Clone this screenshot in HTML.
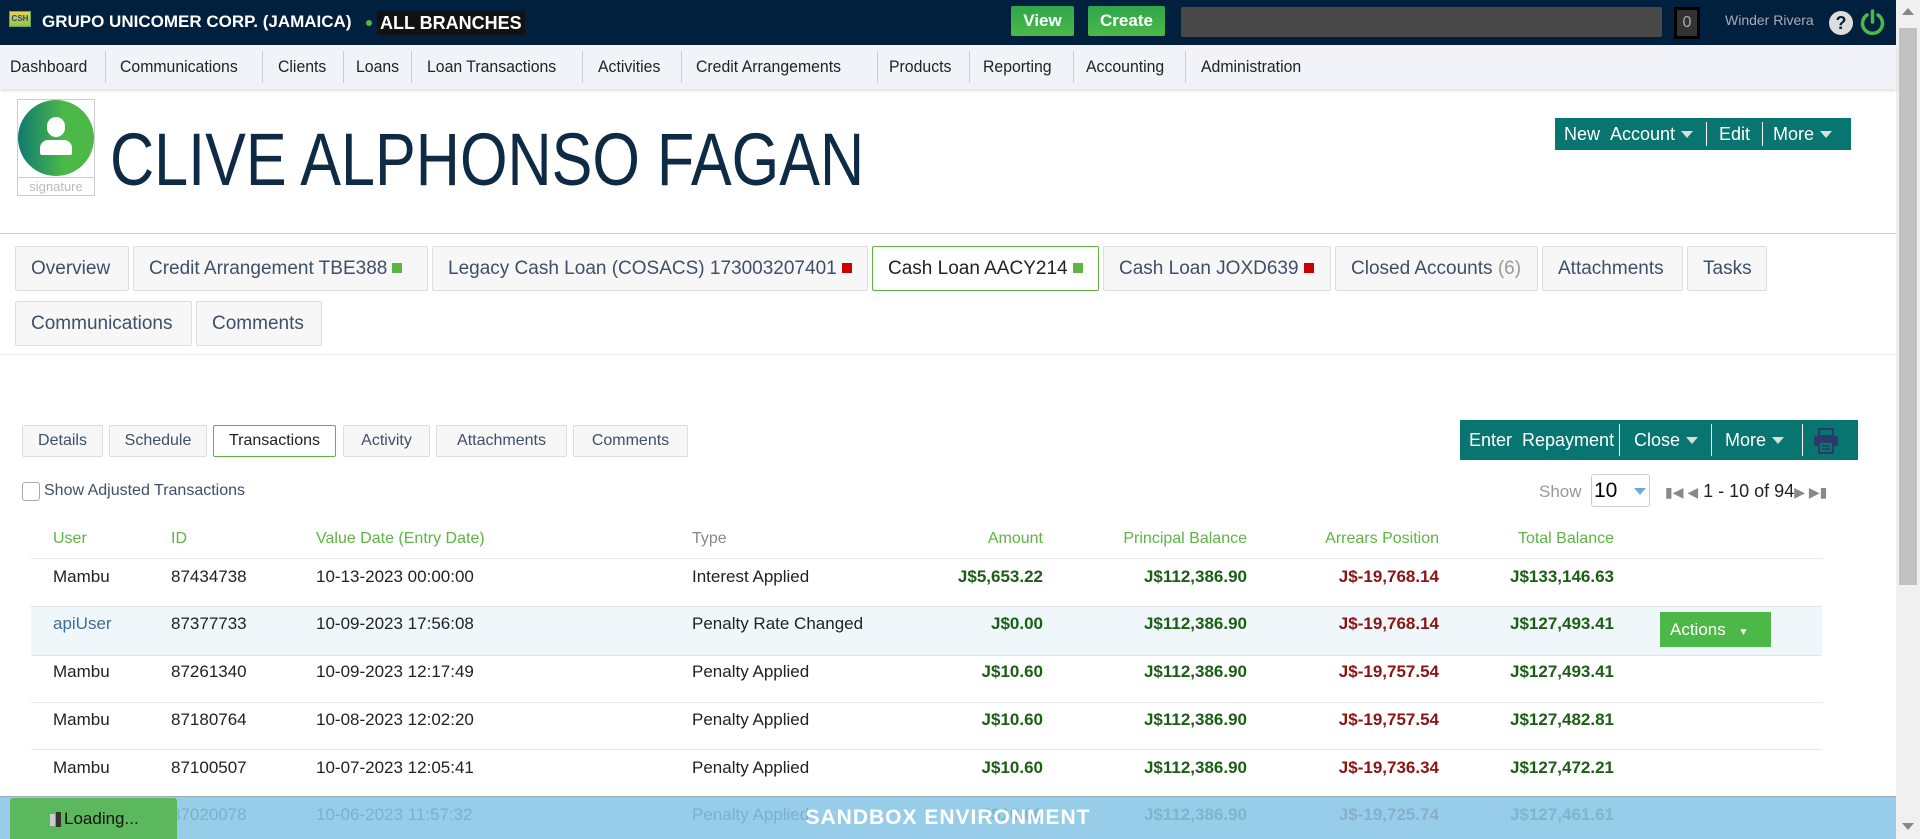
<!DOCTYPE html>
<html><head><meta charset="utf-8"><style>
*{box-sizing:border-box;margin:0;padding:0}
body{width:1920px;height:839px;overflow:hidden;background:#fff;font-family:"Liberation Sans",sans-serif;position:relative;color:#222}
.a{position:absolute;white-space:nowrap}
.top{left:0;top:0;width:1896px;height:45px;background:#01203e}
.nav{left:0;top:45px;width:1896px;height:44px;background:#f2f3f8;box-shadow:0 2px 3px rgba(0,0,0,.12)}
.ni{top:45px;height:44px;line-height:44px;font-size:17px;color:#222;transform:scaleX(.93);transform-origin:left}
.sep{top:51px;width:1px;height:32px;background:#ccc}
.tab{height:45px;line-height:43px;border:1px solid #ddd;border-radius:2px;background:#f7f7f7;font-size:19px;color:#3e5068;padding-left:15px}
.st{top:425px;height:32px;line-height:30px;border:1px solid #ddd;border-radius:2px;background:#f7f7f7;font-size:16px;color:#3e5068;text-align:center}
.sq{display:inline-block;width:10px;height:10px;margin-left:5px;vertical-align:1px}
.th{top:530px;font-size:16px;color:#5db544}
.td{font-size:17px}
.r{text-align:right}
.b{font-weight:bold}
.g{color:#1c5e16}.rd{color:#8b1414}
.hl{height:1px;background:#e6e6e6;left:31px;width:1791px}
.tri{display:inline-block;width:0;height:0;border-left:6px solid transparent;border-right:6px solid transparent;border-top:7px solid #fff;margin-left:6px;vertical-align:2px}
</style></head><body>
<div class="a top"></div>
<div class="a" style="left:9px;top:11px;width:22px;height:16px;background:linear-gradient(#e7d34a,#9bc23a);border:1px solid #5a7;font-size:8px;color:#1c4a9c;font-weight:bold;line-height:14px;text-align:center">CSH</div>
<div class="a b" style="left:42px;top:12px;font-size:17px;color:#fff">GRUPO UNICOMER CORP. (JAMAICA)</div>
<div class="a" style="left:366px;top:20px;width:6px;height:6px;border-radius:3px;background:#4cb848"></div>
<div class="a b" style="left:377px;top:11px;height:24px;padding:0 3px;background:#121212;color:#fff;font-size:18px;line-height:24px">ALL BRANCHES</div>
<div class="a b" style="left:1011px;top:6px;width:63px;height:30px;background:linear-gradient(#2ea64a,#4cb848);border-radius:2px;color:#fff;font-size:17px;text-align:center;line-height:30px">View</div>
<div class="a b" style="left:1088px;top:6px;width:77px;height:30px;background:linear-gradient(#2ea64a,#4cb848);border-radius:2px;color:#fff;font-size:17px;text-align:center;line-height:30px">Create</div>
<div class="a" style="left:1181px;top:7px;width:481px;height:30px;background:#474747;border-radius:2px"></div>
<div class="a" style="left:1674px;top:7px;width:26px;height:32px;background:#333;border:3px solid #000;color:#aaa;font-size:16px;text-align:center;line-height:26px">0</div>
<div class="a" style="left:1725px;top:12px;font-size:14px;color:#aab">Winder Rivera</div>
<div class="a b" style="left:1829px;top:11px;width:24px;height:24px;border-radius:12px;background:#ddd;color:#01203e;font-size:18px;text-align:center;line-height:24px">?</div>
<svg class="a" style="left:1860px;top:9px" width="25" height="27" viewBox="0 0 25 27"><path d="M7 6A10 10 0 1 0 18 6" fill="none" stroke="#4cb848" stroke-width="3.5" stroke-linecap="round"/><path d="M12.5 2V13" stroke="#4cb848" stroke-width="3.5" stroke-linecap="round"/></svg>
<div class="a" style="left:1896px;top:0;width:24px;height:839px;background:#f0f0f0"></div>
<div class="a" style="left:1899px;top:28px;width:18px;height:557px;background:#c1c1c1"></div>
<div class="a" style="left:1902px;top:8px;width:0;height:0;border-left:6px solid transparent;border-right:6px solid transparent;border-bottom:7px solid #888"></div>
<div class="a" style="left:1902px;top:823px;width:0;height:0;border-left:6px solid transparent;border-right:6px solid transparent;border-top:7px solid #888"></div>

<div class="a nav"></div>
<div class="a ni" style="left:10px">Dashboard</div>
<div class="a ni" style="left:120px">Communications</div>
<div class="a ni" style="left:278px">Clients</div>
<div class="a ni" style="left:356px">Loans</div>
<div class="a ni" style="left:427px">Loan Transactions</div>
<div class="a ni" style="left:598px">Activities</div>
<div class="a ni" style="left:696px">Credit Arrangements</div>
<div class="a ni" style="left:889px">Products</div>
<div class="a ni" style="left:983px">Reporting</div>
<div class="a ni" style="left:1086px">Accounting</div>
<div class="a ni" style="left:1201px">Administration</div>
<div class="a sep" style="left:105px"></div><div class="a sep" style="left:262px"></div><div class="a sep" style="left:343px"></div><div class="a sep" style="left:411px"></div><div class="a sep" style="left:582px"></div><div class="a sep" style="left:681px"></div><div class="a sep" style="left:877px"></div><div class="a sep" style="left:969px"></div><div class="a sep" style="left:1073px"></div><div class="a sep" style="left:1185px"></div>

<div class="a" style="left:17px;top:99px;width:78px;height:97px;border:1px solid #ccc"></div>
<div class="a" style="left:18px;top:100px;width:76px;height:76px;border-radius:38px;background:linear-gradient(90deg,#0f7a70,#4cb848 60%)"></div>
<div class="a" style="left:47px;top:117px;width:18px;height:20px;border-radius:9px;background:#fff"></div>
<div class="a" style="left:40px;top:140px;width:32px;height:15px;border-radius:8px 8px 2px 2px;background:#fff"></div>
<div class="a" style="left:18px;top:177px;width:76px;height:18px;border-top:1px solid #ccc;font-size:13px;color:#bbb;text-align:center;line-height:18px">signature</div>
<div class="a" style="left:110px;top:118px;font-size:74px;color:#0f2a44;line-height:84px;transform:scaleX(.826);transform-origin:left">CLIVE ALPHONSO FAGAN</div>

<div class="a" style="left:1555px;top:118px;width:296px;height:32px;background:#087570;color:#fff;font-size:18px;line-height:32px">
<span class="a" style="left:9px">New &nbsp;Account<span class="tri" style="border-top-color:#ddd"></span></span>
<span class="a" style="left:151px;top:4px;width:1px;height:24px;background:#fff"></span>
<span class="a" style="left:164px">Edit</span>
<span class="a" style="left:207px;top:4px;width:1px;height:24px;background:#fff"></span>
<span class="a" style="left:218px">More<span class="tri" style="border-top-color:#ddd"></span></span></div>

<div class="a" style="left:0;top:233px;width:1896px;height:1px;background:#ccc"></div>
<div class="a tab" style="left:15px;top:246px;width:114px">Overview</div>
<div class="a tab" style="left:133px;top:246px;width:295px">Credit Arrangement TBE388<span class="sq" style="background:#5db544"></span></div>
<div class="a tab" style="left:432px;top:246px;width:436px">Legacy Cash Loan (COSACS) 173003207401<span class="sq" style="background:#c00"></span></div>
<div class="a tab" style="left:872px;top:246px;width:227px;background:#fff;border-color:#5db544;color:#222">Cash Loan AACY214<span class="sq" style="background:#5db544"></span></div>
<div class="a tab" style="left:1103px;top:246px;width:228px">Cash Loan JOXD639<span class="sq" style="background:#c00"></span></div>
<div class="a tab" style="left:1335px;top:246px;width:203px">Closed Accounts <span style="color:#999">(6)</span></div>
<div class="a tab" style="left:1542px;top:246px;width:141px">Attachments</div>
<div class="a tab" style="left:1687px;top:246px;width:80px">Tasks</div>
<div class="a tab" style="left:15px;top:301px;width:177px">Communications</div>
<div class="a tab" style="left:196px;top:301px;width:126px">Comments</div>
<div class="a" style="left:0;top:354px;width:1896px;height:1px;background:#eee"></div>

<div class="a st" style="left:22px;width:81px">Details</div>
<div class="a st" style="left:109px;width:98px">Schedule</div>
<div class="a st" style="left:213px;width:123px;background:#fff;border-color:#5db544;color:#222">Transactions</div>
<div class="a st" style="left:343px;width:87px">Activity</div>
<div class="a st" style="left:436px;width:131px">Attachments</div>
<div class="a st" style="left:573px;width:115px">Comments</div>

<div class="a" style="left:1460px;top:420px;width:398px;height:40px;background:#087570;color:#fff;font-size:18px;line-height:40px">
<span class="a" style="left:9px">Enter &nbsp;Repayment</span>
<span class="a" style="left:159px;top:4px;width:1px;height:32px;background:#fff"></span>
<span class="a" style="left:174px">Close<span class="tri" style="border-top-color:#ddd"></span></span>
<span class="a" style="left:251px;top:4px;width:1px;height:32px;background:#fff"></span>
<span class="a" style="left:265px">More<span class="tri" style="border-top-color:#ddd"></span></span>
<span class="a" style="left:342px;top:4px;width:1px;height:32px;background:#fff"></span>
<svg class="a" style="left:352px;top:7px" width="28" height="28" viewBox="0 0 28 28"><rect x="7" y="2" width="14" height="7" fill="none" stroke="#2a3a6a" stroke-width="2"/><rect x="2" y="9" width="24" height="10" rx="2" fill="#2a3a6a"/><rect x="7" y="15" width="14" height="11" fill="#087570" stroke="#2a3a6a" stroke-width="2"/><path d="M10 19h8M10 22h8" stroke="#2a3a6a" stroke-width="1.5"/></svg></div>

<div class="a" style="left:22px;top:482px;width:18px;height:19px;border:1px solid #aaa;border-radius:3px;background:#fff"></div>
<div class="a" style="left:44px;top:482px;font-size:16px;color:#3e5068">Show Adjusted Transactions</div>
<div class="a" style="left:1539px;top:482px;font-size:17px;color:#999">Show</div>
<div class="a" style="left:1591px;top:474px;width:59px;height:33px;border:1px solid #ccc;border-radius:3px;font-size:21px;line-height:31px;padding-left:2px;color:#000">10<span class="a" style="left:42px;top:13px;width:0;height:0;border-left:6px solid transparent;border-right:6px solid transparent;border-top:7px solid #6aaed6"></span></div>
<div class="a" style="left:1665px;top:481px;font-size:18px;color:#222"><span style="color:#888;font-size:14px">▮◀ ◀</span> 1 - 10 of 94<span style="color:#888;font-size:14px">▶ ▶▮</span></div>

<div class="a th" style="left:53px">User</div>
<div class="a th" style="left:171px">ID</div>
<div class="a th" style="left:316px">Value Date (Entry Date)</div>
<div class="a th" style="left:692px;color:#888">Type</div>
<div class="a th r" style="left:943px;width:100px">Amount</div>
<div class="a th r" style="left:1047px;width:200px">Principal Balance</div>
<div class="a th r" style="left:1239px;width:200px">Arrears Position</div>
<div class="a th r" style="left:1414px;width:200px">Total Balance</div>
<div class="a hl" style="top:558px"></div>
<div class="a" style="left:31px;top:606px;width:1791px;height:49px;background:#f0f7fa"></div>
<div class="a hl" style="top:606px"></div><div class="a hl" style="top:655px"></div><div class="a hl" style="top:702px"></div><div class="a hl" style="top:749px"></div>

<div class="a td" style="left:53px;top:567px">Mambu</div><div class="a td" style="left:171px;top:567px">87434738</div><div class="a td" style="left:316px;top:567px">10-13-2023 00:00:00</div><div class="a td" style="left:692px;top:567px">Interest Applied</div>
<div class="a td b g r" style="left:843px;top:567px;width:200px">J$5,653.22</div><div class="a td b g r" style="left:1047px;top:567px;width:200px">J$112,386.90</div><div class="a td b rd r" style="left:1239px;top:567px;width:200px">J$-19,768.14</div><div class="a td b g r" style="left:1414px;top:567px;width:200px">J$133,146.63</div>

<div class="a td" style="left:53px;top:614px;color:#3d6c99">apiUser</div><div class="a td" style="left:171px;top:614px">87377733</div><div class="a td" style="left:316px;top:614px">10-09-2023 17:56:08</div><div class="a td" style="left:692px;top:614px">Penalty Rate Changed</div>
<div class="a td b g r" style="left:843px;top:614px;width:200px">J$0.00</div><div class="a td b g r" style="left:1047px;top:614px;width:200px">J$112,386.90</div><div class="a td b rd r" style="left:1239px;top:614px;width:200px">J$-19,768.14</div><div class="a td b g r" style="left:1414px;top:614px;width:200px">J$127,493.41</div>
<div class="a" style="left:1660px;top:612px;width:111px;height:35px;background:#4cb848;color:#fff;font-size:17px;line-height:35px;padding-left:10px">Actions <span style="font-size:10px;margin-left:8px">▼</span></div>

<div class="a td" style="left:53px;top:662px">Mambu</div><div class="a td" style="left:171px;top:662px">87261340</div><div class="a td" style="left:316px;top:662px">10-09-2023 12:17:49</div><div class="a td" style="left:692px;top:662px">Penalty Applied</div>
<div class="a td b g r" style="left:843px;top:662px;width:200px">J$10.60</div><div class="a td b g r" style="left:1047px;top:662px;width:200px">J$112,386.90</div><div class="a td b rd r" style="left:1239px;top:662px;width:200px">J$-19,757.54</div><div class="a td b g r" style="left:1414px;top:662px;width:200px">J$127,493.41</div>

<div class="a td" style="left:53px;top:710px">Mambu</div><div class="a td" style="left:171px;top:710px">87180764</div><div class="a td" style="left:316px;top:710px">10-08-2023 12:02:20</div><div class="a td" style="left:692px;top:710px">Penalty Applied</div>
<div class="a td b g r" style="left:843px;top:710px;width:200px">J$10.60</div><div class="a td b g r" style="left:1047px;top:710px;width:200px">J$112,386.90</div><div class="a td b rd r" style="left:1239px;top:710px;width:200px">J$-19,757.54</div><div class="a td b g r" style="left:1414px;top:710px;width:200px">J$127,482.81</div>

<div class="a td" style="left:53px;top:758px">Mambu</div><div class="a td" style="left:171px;top:758px">87100507</div><div class="a td" style="left:316px;top:758px">10-07-2023 12:05:41</div><div class="a td" style="left:692px;top:758px">Penalty Applied</div>
<div class="a td b g r" style="left:843px;top:758px;width:200px">J$10.60</div><div class="a td b g r" style="left:1047px;top:758px;width:200px">J$112,386.90</div><div class="a td b rd r" style="left:1239px;top:758px;width:200px">J$-19,736.34</div><div class="a td b g r" style="left:1414px;top:758px;width:200px">J$127,472.21</div>

<div class="a td" style="left:53px;top:805px">Mambu</div><div class="a td" style="left:171px;top:805px">87020078</div><div class="a td" style="left:316px;top:805px">10-06-2023 11:57:32</div><div class="a td" style="left:692px;top:805px">Penalty Applied</div>
<div class="a td b g r" style="left:843px;top:805px;width:200px">J$10.60</div><div class="a td b g r" style="left:1047px;top:805px;width:200px">J$112,386.90</div><div class="a td b rd r" style="left:1239px;top:805px;width:200px">J$-19,725.74</div><div class="a td b g r" style="left:1414px;top:805px;width:200px">J$127,461.61</div>

<div class="a" style="left:0;top:796px;width:1896px;height:43px;background:rgba(135,198,230,.87);border-top:1px solid #9ab"></div>
<div class="a b" style="left:0;top:796px;width:1896px;text-align:center;line-height:43px;font-size:21px;color:#fff;letter-spacing:1px">SANDBOX ENVIRONMENT</div>
<div class="a" style="left:10px;top:798px;width:167px;height:41px;background:#5cb85c;border-radius:3px 3px 0 0;color:#111;font-size:17px;line-height:41px;padding-left:38px"><span class="a" style="left:40px;top:16px;width:5px;height:12px;background:#ccc"></span><span class="a" style="left:46px;top:14px;width:5px;height:15px;background:#333"></span><span style="margin-left:16px">Loading...</span></div>
</body></html>
